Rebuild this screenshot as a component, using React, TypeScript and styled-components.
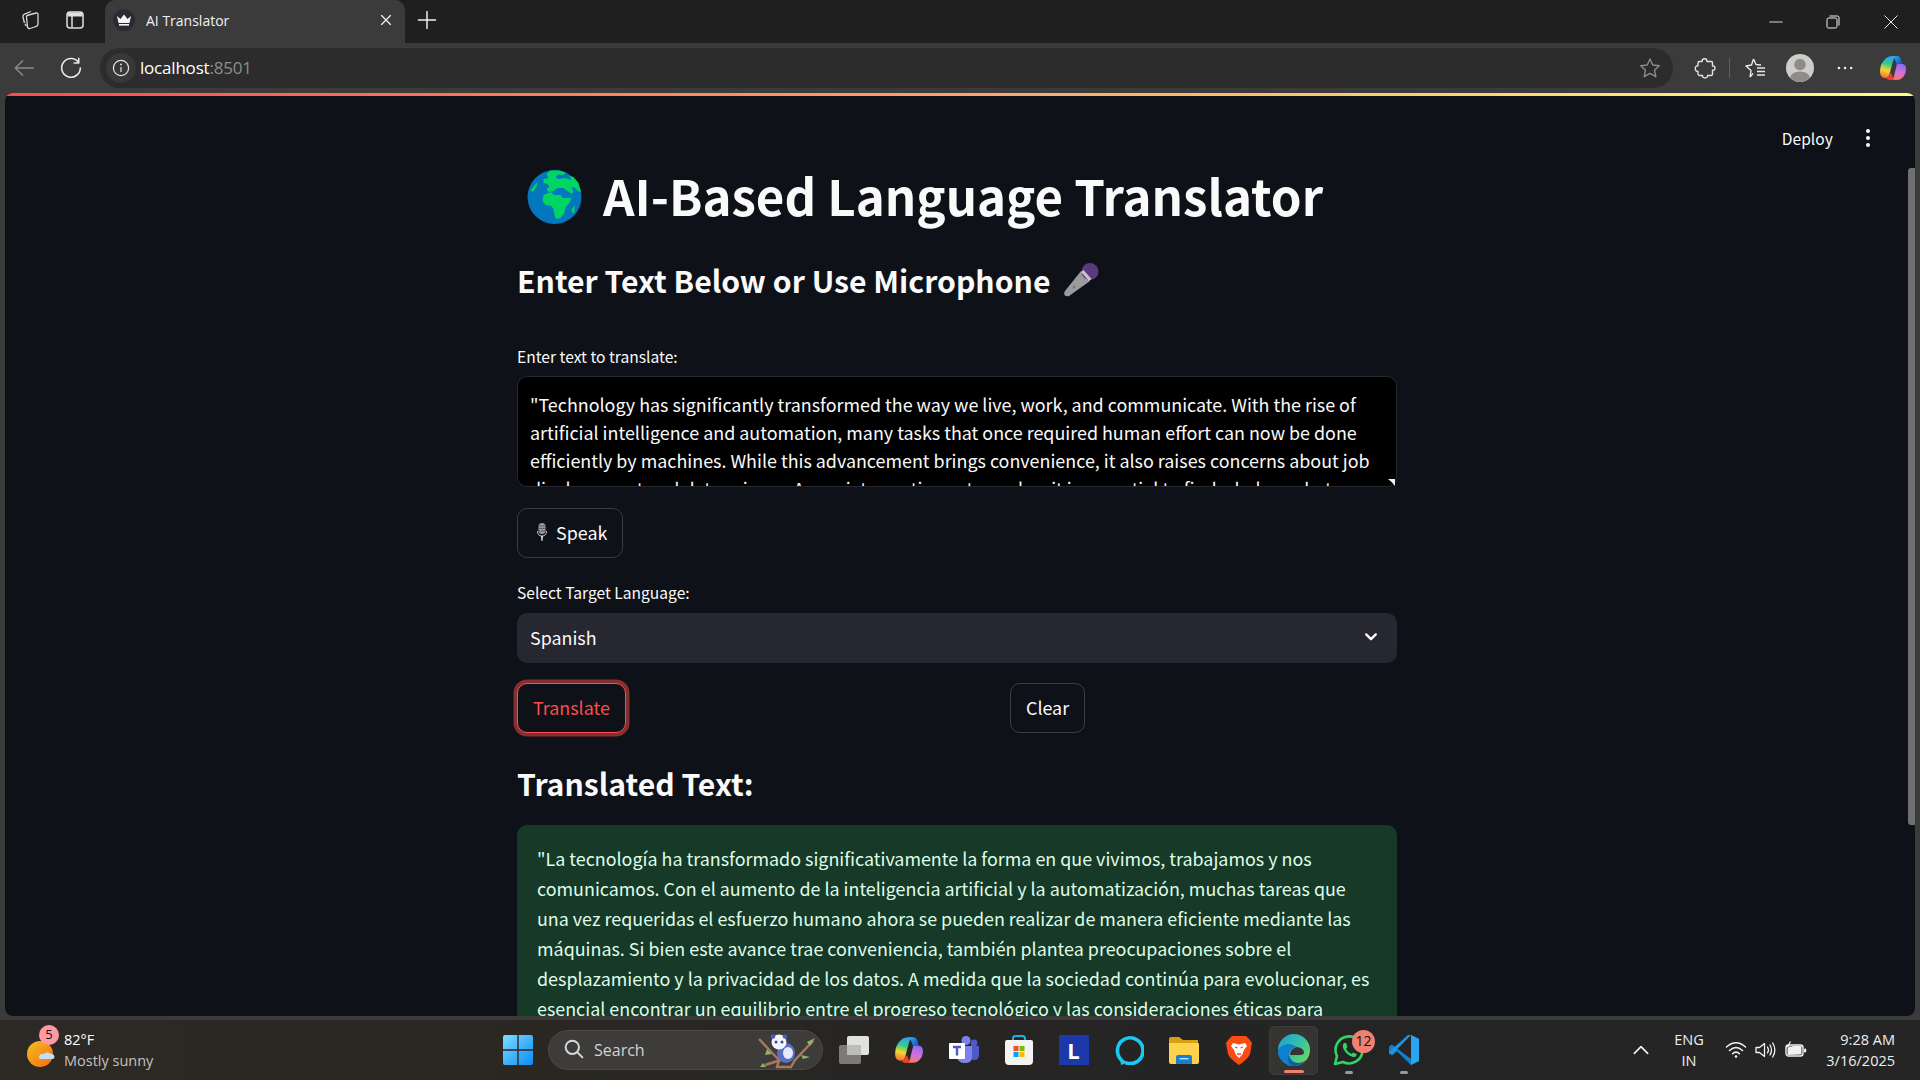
import React from "react";
import styled, { createGlobalStyle } from "styled-components";

const APP_FONT = '"Noto Sans CJK SC", "Noto Sans", "Liberation Sans", sans-serif';
const UI_FONT = '"Open Sans", "Noto Sans", "Liberation Sans", sans-serif';

const Global = createGlobalStyle`
  html, body { margin: 0; padding: 0; background: #3b3b3b; }
  #root { width: 1920px; height: 1080px; }
  * { box-sizing: border-box; }
`;

const Desktop = styled.div`
  width: 1920px; height: 1080px; overflow: hidden;
  display: flex; flex-direction: column; background: #3b3b3b;
  font-family: ${UI_FONT}; color: #fafafa;
`;

/* ---------- Browser chrome ---------- */
const TabStrip = styled.div`
  height: 43px; flex: none; background: #1f1f1f; display: flex; align-items: stretch;
`;
const StripIcon = styled.div<{ $w: number }>`
  width: ${p => p.$w}px; flex: none; display: flex; align-items: center; justify-content: center; padding-bottom: 3px;
`;
const StripLead = styled.div`
  width: 105px; flex: none; display: flex; padding-left: 7px; padding-right: 8px; justify-content: space-between;
`;
const Tab = styled.div`
  width: 300px; flex: none; background: #3b3b3b; border-radius: 10px 10px 0 0;
  display: flex; align-items: center; padding: 0 11px 3px 8px;
`;
const Favicon = styled.div`
  width: 22px; height: 22px; border-radius: 50%; background: #2a2a35; flex: none;
  display: flex; align-items: center; justify-content: center; margin-right: 11px;
`;
const TabTitle = styled.span`
  flex: 1; font-size: 14px; color: #f2f2f2; white-space: nowrap;
`;
const WindowControls = styled.div`
  margin-left: auto; display: flex; align-items: center; width: 173px;
`;
const WinBtn = styled.div`
  width: 57.6px; height: 43px; display: flex; align-items: center; justify-content: center;
`;
const Toolbar = styled.div`
  height: 50px; flex: none; display: flex; align-items: center; background: #3b3b3b; padding: 5px 0;
`;
const NavSlot = styled.div<{ $w: number }>`
  width: ${p => p.$w}px; flex: none; display: flex; align-items: center; justify-content: center;
`;
const AddressBar = styled.div`
  width: 1573px; height: 40px; border-radius: 20px; background: #2c2c2c;
  display: flex; align-items: center; flex: none; padding: 0 12px 0 6px;
`;
const InfoDisc = styled.div`
  width: 30px; height: 30px; border-radius: 50%; background: #383838; flex: none;
  display: flex; align-items: center; justify-content: center; margin-right: 4px;
`;
const Url = styled.span`
  font-size: 17px; color: #fff; letter-spacing: -0.2px; margin-top: -2px;
`;
const UrlPort = styled.span`
  color: #8c8c8c;
`;
const AddressEnd = styled.div`
  margin-left: auto; display: flex; align-items: center;
`;
const ToolActions = styled.div`
  display: flex; align-items: center; flex: none; margin-left: 20px;
`;
const ToolDivider = styled.div`
  width: 1px; height: 20px; background: #5f5f5f; flex: none; margin: 0 13px 0 12px;
`;
const Avatar = styled.div`
  width: 28px; height: 28px; flex: none; margin: 0 19px;
`;

/* ---------- Streamlit page ---------- */
const Page = styled.main`
  flex: 1; min-height: 0; margin: 0 5px 4px; border-radius: 8px; overflow: hidden;
  position: relative; background: #0e1117;
`;
const Decoration = styled.div`
  height: 3px; background: linear-gradient(90deg, rgb(255, 75, 75), rgb(255, 253, 128));
`;
const AppHeader = styled.div`
  position: absolute; top: 33px; right: 45px; display: flex; align-items: center; gap: 33px;
  font-family: ${APP_FONT}; font-size: 15.6px; line-height: 24px; color: #fafafa;
`;
const Kebab = styled.div`
  display: flex; flex-direction: column; gap: 2.6px;
  span { width: 4.2px; height: 4.2px; border-radius: 50%; background: #fafafa; display: block; }
`;
const ScrollThumb = styled.div`
  position: absolute; right: 0; top: 75px; width: 7px; height: 657px; background: #6f6f6f; border-radius: 3px 0 0 3px;
`;
const Column = styled.div`
  width: 880px; margin-left: 512px; padding-top: 62px; font-family: ${APP_FONT};
`;
const Title = styled.h1`
  margin: 0; height: 74px; display: flex; align-items: center; gap: 21px; padding-left: 10px;
  font-size: 49.2px; line-height: 74px; font-weight: 700; color: #fafafa; white-space: nowrap;
  svg { flex: none; margin-top: 3px; }
`;
const Subhead = styled.h2<{ $top: number }>`
  margin: ${p => p.$top}px 0 0; display: flex; align-items: center; gap: 13px;
  font-size: 30.2px; line-height: 48px; font-weight: 600; color: #fafafa; white-space: nowrap;
  svg { flex: none; }
`;
const FieldLabel = styled.label<{ $top: number }>`
  display: block; margin-top: ${p => p.$top}px; font-size: 15.6px; line-height: 24px; color: #fafafa;
`;
const TextAreaWrap = styled.div`
  position: relative; margin-top: 8px; height: 111px;
`;
const TextArea = styled.textarea`
  display: block; width: 880px; height: 111px; margin: 0; padding: 13px 13px 0 12px;
  background: #000; border: 1px solid #262730; border-radius: 10px; color: #fafafa;
  font-family: ${APP_FONT}; font-size: 17.9px; line-height: 28px; outline: none;
  resize: none; overflow: hidden; scrollbar-width: none;
`;
const ResizeGrip = styled.span`
  position: absolute; right: 2px; bottom: 1px; width: 7px; height: 7px; background: #f2f2f2;
  clip-path: polygon(0 0, 100% 0, 100% 100%, 55% 45%);
`;
const Button = styled.button<{ $active?: boolean }>`
  height: 50px; padding: 0 15px 2px; border-radius: 10px;
  background: #0e1117; font-family: ${APP_FONT}; font-size: 17.9px; line-height: 28px;
  color: ${p => (p.$active ? "#ff4b4b" : "#fafafa")};
  border: 1px solid ${p => (p.$active ? "#ff4b4b" : "#3a3b44")};
  box-shadow: ${p => (p.$active ? "0 0 0 3.5px rgba(255, 75, 75, 0.5)" : "none")};
  display: inline-flex; align-items: center; gap: 5px;
`;
const SpeakRow = styled.div`
  margin-top: 21px; display: flex;
`;
const SelectBox = styled.div`
  margin-top: 9px; height: 50px; border-radius: 10px; background: #262730; display: flex;
  align-items: center; justify-content: space-between; padding: 0 19px 2px 13px; font-size: 17.9px; color: #fafafa;
`;
const ActionRow = styled.div`
  margin-top: 20px; display: grid; grid-template-columns: 493px auto; justify-content: start;
`;
const ActionCell = styled.div`
  display: flex;
`;
const ResultBox = styled.div`
  margin-top: 18px; background: #173a28; border-radius: 10px; padding: 18px 20px 30px;
  color: #dffde9; font-size: 17.9px; line-height: 30px; height: 300px;
`;

/* ---------- Taskbar ---------- */
const Taskbar = styled.footer`
  height: 60px; flex: none; display: flex; align-items: center; position: relative;
  background: linear-gradient(90deg, #2d2925, #2a2723 30%, #252424 60%, #252525);
`;
const Weather = styled.div`
  width: 493px; flex: none; display: flex; align-items: center; padding-left: 27px; gap: 11px;
`;
const WeatherArt = styled.div`
  position: relative; width: 26px; height: 26px; flex: none; margin-top: 8px;
`;
const WeatherBadge = styled.span`
  position: absolute; left: 12px; top: -16px; width: 20px; height: 20px; border-radius: 50%;
  background: #ff9aa4; color: #111; font-size: 13px; line-height: 19px; text-align: center;
`;
const WeatherText = styled.div`
  display: flex; flex-direction: column; font-size: 14.5px; line-height: 21px; white-space: nowrap; color: #fff;
`;
const WeatherSub = styled.span`
  color: #c4c2bf;
`;
const TaskCenter = styled.div`
  display: flex; align-items: center; gap: 6px;
`;
const TaskSlot = styled.div<{ $active?: boolean }>`
  width: 49px; height: 49px; flex: none; border-radius: 5px; position: relative;
  display: flex; align-items: center; justify-content: center;
  background: ${p => (p.$active ? "#363431" : "transparent")};
  border: 1px solid ${p => (p.$active ? "#3e3c3a" : "transparent")};
`;
const SearchPill = styled.div`
  width: 275px; height: 40px; flex: none; border-radius: 20px; background: #3d3c3a; border: 1px solid #4b4a48;
  display: flex; align-items: center; padding-left: 14px; font-size: 16px; color: #d2d2d0; gap: 7px;
  position: relative;
`;
const SearchArt = styled.div`
  position: absolute; right: 5px; top: 2px; width: 60px; height: 36px;
`;
const RunDot = styled.span<{ $on?: boolean }>`
  position: absolute; bottom: ${p => (p.$on ? 1 : 0)}px; left: 50%; transform: translateX(-50%);
  height: 3px; border-radius: 2px; width: ${p => (p.$on ? 20 : 8)}px;
  background: ${p => (p.$on ? "#f08070" : "#9a9a9a")};
`;
const CountBadge = styled.span`
  position: absolute; right: -3px; top: 3px; width: 23px; height: 23px; border-radius: 50%;
  background: #f08070; color: #111; font-size: 14px; line-height: 22px; text-align: center;
`;
const LetterTile = styled.div`
  width: 30px; height: 30px; background: #1b39a8; color: #fff; font-weight: 700; font-size: 22px;
  line-height: 30px; text-align: center; font-family: ${UI_FONT};
`;
const Tray = styled.div`
  margin-left: auto; display: flex; align-items: center; height: 100%; padding-right: 25px;
`;
const TrayIcon = styled.div<{ $w: number }>`
  width: ${p => p.$w}px; flex: none; display: flex; align-items: center; justify-content: center;
`;
const Lang = styled.div`
  width: 50px; text-align: center; font-size: 14.5px; line-height: 21px; color: #eee; margin: 0 7px 0 8px;
`;
const Clock = styled.div`
  width: 82px; margin-left: 2px; text-align: right; font-size: 14.5px; line-height: 21px; color: #eee; white-space: nowrap;
`;

/* ---------- Drawings ---------- */
const Collections = () => (
  <svg width="22" height="22" viewBox="0 0 22 22" fill="none" stroke="#d9d9d9" strokeWidth="1.3">
    <path d="M8 6.5 L17 4 Q19 3.6 19 5.5 V15 Q19 17 17 17.5 L11 19.5 Q9 20 8.5 18 L7.5 8 Q7.4 7 8 6.5Z" />
    <path d="M5.5 14 L4 8 Q3.7 6 5.5 5.2 L12 2.5" />
    <path d="M7.5 17 L6 15" />
  </svg>
);
const VerticalTabs = () => (
  <svg width="20" height="20" viewBox="0 0 20 20" fill="none">
    <rect x="2" y="2" width="16" height="16" rx="3" stroke="#e0e0e0" strokeWidth="1.5" />
    <path d="M2.5 5 Q2.5 2.5 5 2.5 H15 Q17.5 2.5 17.5 5 V6.5 H2.5Z" fill="#e0e0e0" />
    <path d="M7 6 V17.5" stroke="#e0e0e0" strokeWidth="1.5" />
  </svg>
);
const Crown = () => (
  <svg width="16" height="12" viewBox="0 0 16 12">
    <path d="M1 2 L4.5 5 L8 0.5 L11.5 5 L15 2 L13.5 9 H2.5Z" fill="#f5f5f5" />
    <rect x="3" y="10" width="10" height="1.6" fill="#f5f5f5" />
  </svg>
);
const Line = ({ d, size = 18, color = "#e8e8e8", w = 1.3 }: { d: string; size?: number; color?: string; w?: number }) => (
  <svg width={size} height={size} viewBox="0 0 18 18" fill="none" stroke={color} strokeWidth={w} strokeLinecap="round" strokeLinejoin="round">
    <path d={d} />
  </svg>
);
const Restore = () => (
  <svg width="14" height="14" viewBox="0 0 14 14" fill="none" stroke="#f0f0f0" strokeWidth="1">
    <rect x="1" y="3" width="10" height="10" rx="1.5" />
    <path d="M3.5 1 H11.5 Q13 1 13 2.5 V10.5" />
  </svg>
);
const StarIcon = ({ color }: { color: string }) => (
  <svg width="22" height="22" viewBox="0 0 22 22" fill="none" stroke={color} strokeWidth="1.4" strokeLinejoin="round">
    <path d="M11 2 L13.8 8 L20.3 8.8 L15.5 13.2 L16.8 19.7 L11 16.4 L5.2 19.7 L6.5 13.2 L1.7 8.8 L8.2 8Z" />
  </svg>
);
const PuzzleIcon = () => (
  <svg width="22" height="22" viewBox="0 0 22 22" fill="none" stroke="#e4e4e4" strokeWidth="1.4" strokeLinejoin="round">
    <path d="M8 4.5 Q8 1.8 10.5 1.8 Q13 1.8 13 4.5 H17.5 Q18.5 4.5 18.5 6 V9 Q21 8.8 21 11 Q21 13.4 18.5 13.2 V17 Q18.5 18.5 17 18.5 H13.5 Q13.6 21 11 21 Q8.4 21 8.5 18.5 H5.5 Q4.2 18.5 4 17 V14.5 Q1.3 14.6 1.3 11.5 Q1.3 8.6 4 8.8 V6 Q4 4.5 5.5 4.5Z" />
  </svg>
);
const FavStar = () => (
  <svg width="22" height="22" viewBox="0 0 22 22" fill="none" stroke="#e8e8e8" strokeWidth="1.4" strokeLinejoin="round">
    <path d="M9.5 2 L12 7.5 L17 8 M6 20 L9 16.5 M6 20 L7 13.5 L2 9 L7.5 8 L9.5 2" />
    <path d="M13 11 H21 M13 14.5 H21 M13 18 H21" />
  </svg>
);
const AvatarArt = () => (
  <svg width="28" height="28" viewBox="0 0 28 28">
    <circle cx="14" cy="14" r="14" fill="#cfcdc9" />
    <circle cx="14" cy="10.5" r="5.8" fill="#8f8d8a" />
    <path d="M3.8 23.5 Q6 17.5 14 17.5 Q22 17.5 24.2 23.5 A14 14 0 0 1 3.8 23.5Z" fill="#8f8d8a" />
  </svg>
);
const CopilotArt = ({ size }: { size: number }) => (
  <svg width={size} height={size} viewBox="0 0 28 28">
    <defs>
      <linearGradient id="copL" x1="0.5" y1="0" x2="0.3" y2="1">
        <stop offset="0" stopColor="#27a6f0" />
        <stop offset="0.35" stopColor="#36c98a" />
        <stop offset="0.65" stopColor="#f4d62f" />
        <stop offset="1" stopColor="#f5703a" />
      </linearGradient>
      <linearGradient id="copT" x1="0" y1="0" x2="1" y2="1">
        <stop offset="0" stopColor="#2bb4f4" />
        <stop offset="1" stopColor="#1c3fc0" />
      </linearGradient>
      <linearGradient id="copR" x1="0.6" y1="0" x2="0.4" y2="1">
        <stop offset="0" stopColor="#8f6cf4" />
        <stop offset="0.55" stopColor="#d86fd8" />
        <stop offset="1" stopColor="#f47a5a" />
      </linearGradient>
    </defs>
    <path d="M8 3.5 Q10 2 13 2 H18 Q15 3 14 7 L10.5 20 Q9.5 24 6 24 Q1 24 1 17.5 Q1 8.5 8 3.5Z" fill="url(#copL)" />
    <path d="M13 2 H18 Q20.8 2 21.7 5 L23.5 11 H18 L16.3 6.2 Q15.5 3.6 13 2Z" fill="url(#copT)" />
    <path d="M18 10 H22.5 Q27 10 27 15 Q27 21 22.5 24.5 Q20.5 26 17 26 H12 Q14.5 25 15.3 21Z" fill="url(#copR)" />
    <path d="M6 24 Q9.5 24 10.5 20 L12.3 19 L14 24 Q14.5 25.5 16 26 H12.5 Q9.5 26.5 8 25Z" fill="#e8402e" />
  </svg>
);
const Globe = () => (
  <svg width="55" height="54" viewBox="0 0 54 54" role="img">
    <circle cx="27" cy="27" r="27" fill="#0277bd" />
    <path d="M23 0.6 L32 0.4 L38 2.4 L36 5 L31 4.5 L28 7 L31 9 L38 8 L44 10 L42 6 L46 7 L51 13 L53.5 22 L50 21 L48 18 L44 17 L46 22 L44 24 L40 21 L36 18 L30 18 L26 21 L21 22 L19 19 L22 17 L20 14 L16 13 L16 9 L21 8 L19 4Z" fill="#00d563" />
    <path d="M16 25 L23 22 L27 25 L33 25 L35 28 L41 28 L44 28 L42 33 L38 37 L37 43 L33 48 L29 49 L27 46 L26 39 L24 36 L18 35 L15 31Z" fill="#00d563" />
    <path d="M44 40 L47 35 L47 42 L45 44Z" fill="#00d563" />
    <path d="M3 20 L10 12 L9 17 L5 22Z" fill="#00d563" />
  </svg>
);
const MicEmoji = () => (
  <svg width="36" height="34" viewBox="0 0 36 34" role="img">
    <path d="M18 8 L27 18 L6 33 Q3 34 1.5 32 Q0.5 30 2 28Z" fill="#9b9b9b" />
    <circle cx="11" cy="24" r="1.4" fill="#7b7b7b" />
    <circle cx="27" cy="8.5" r="8.5" fill="#5a3a7c" />
    <path d="M18 9 L26 18 L28.5 16 L20.5 7Z" fill="#c9c5cd" />
  </svg>
);
const StudioMic = () => (
  <svg width="18" height="20" viewBox="-3.5 0 18 20" role="img">
    <rect x="2" y="1" width="7" height="11" rx="3.5" fill="#9a9a9a" />
    <path d="M2.5 4 H8.5 M2.5 6.5 H8.5 M2.5 9 H8.5" stroke="#5a5a5a" strokeWidth="0.9" />
    <path d="M1 9 Q1 14 5.5 14 Q10 14 10 9" fill="none" stroke="#d8d8d8" strokeWidth="0.9" />
    <path d="M4.5 14 H6.5 L6 19 H5Z" fill="#e4e4e4" />
  </svg>
);
const Chevron = () => (
  <svg width="14" height="10" viewBox="0 0 14 10" fill="none" stroke="#fafafa" strokeWidth="2.4" strokeLinecap="round" strokeLinejoin="round">
    <path d="M2.2 2.4 L7 7.2 L11.8 2.4" />
  </svg>
);
const SunCloud = () => (
  <svg width="28" height="27" viewBox="0 0 28 27">
    <defs>
      <linearGradient id="sun" x1="0" y1="0" x2="1" y2="1">
        <stop offset="0" stopColor="#f3c021" />
        <stop offset="1" stopColor="#f76a12" />
      </linearGradient>
    </defs>
    <circle cx="13" cy="13" r="13" fill="url(#sun)" />
    <path d="M12 16 Q13 12 17 13 Q19 10.5 23 12.5 Q27 13 27.5 15.5 Q27.5 18 25 18 H14 Q11.5 18 12 16Z" fill="#c6ddf4" />
  </svg>
);
const WinLogo = () => (
  <svg width="30" height="30" viewBox="0 0 30 30">
    <defs>
      <linearGradient id="win" x1="0" y1="0" x2="1" y2="1">
        <stop offset="0" stopColor="#7fdcff" />
        <stop offset="1" stopColor="#0b8cf2" />
      </linearGradient>
    </defs>
    <path d="M0 2 Q0 0 2 0 H14.3 V14.3 H0Z M15.7 0 H28 Q30 0 30 2 V14.3 H15.7Z M0 15.7 H14.3 V30 H2 Q0 30 0 28Z M15.7 15.7 H30 V28 Q30 30 28 30 H15.7Z" fill="url(#win)" />
  </svg>
);
const Panda = () => (
  <svg width="60" height="36" viewBox="0 0 60 36">
    <path d="M2 6 L22 27 L20 34 H34 L38 27 L56 8" fill="none" stroke="#a77a5c" strokeWidth="2.4" />
    <path d="M8 32 L24 27" stroke="#a77a5c" strokeWidth="2.4" />
    <path d="M10 16 L15 21 L8 22Z M50 9 L58 5 L53 13Z M44 22 L53 24 L46 26Z M6 30 L9 34 L3 34Z" fill="#8fb465" />
    <ellipse cx="29" cy="20" rx="9" ry="10" fill="#5a6fc4" />
    <ellipse cx="31" cy="20" rx="5" ry="6" fill="#e8ecfa" />
    <circle cx="22" cy="9" r="7.5" fill="#f2f4fb" />
    <circle cx="16" cy="3.5" r="2.3" fill="#4a5fb4" />
    <circle cx="28" cy="3.5" r="2.3" fill="#4a5fb4" />
    <circle cx="19" cy="9" r="1.5" fill="#3a4b98" />
    <circle cx="25" cy="9" r="1.5" fill="#3a4b98" />
  </svg>
);
const TaskView = () => (
  <svg width="30" height="28" viewBox="0 0 30 28">
    <rect x="0" y="9" width="22" height="19" rx="2" fill="#7b7a78" />
    <rect x="8" y="0" width="22" height="19" rx="2" fill="#f1f1f1" opacity="0.92" />
    <rect x="8" y="9" width="14" height="10" fill="#bdbcbb" />
  </svg>
);
const Teams = () => (
  <svg width="32" height="30" viewBox="0 0 32 30">
    <circle cx="26" cy="8" r="3.4" fill="#5059c9" />
    <circle cx="18" cy="5.5" r="4.5" fill="#7b83eb" />
    <path d="M21 11 H31 V20 Q31 25 26 25 Q22 25 21 22Z" fill="#5059c9" />
    <path d="M9 11 H24 V22 Q24 28 17 28 Q10 28 9 22Z" fill="#7b83eb" />
    <rect x="1" y="8" width="16" height="16" rx="1" fill="#fff" />
    <path d="M5 12 H13 M9 12 V20.5" stroke="#5059c9" strokeWidth="2.4" />
  </svg>
);
const Store = () => (
  <svg width="30" height="30" viewBox="0 0 30 30">
    <path d="M9 7 V3.5 Q9 1 11.5 1 H18.5 Q21 1 21 3.5 V7" fill="none" stroke="#19b3e6" strokeWidth="2" />
    <path d="M1 7 Q1 5 3 5 H27 Q29 5 29 7 V26 Q29 30 25 30 H5 Q1 30 1 26Z" fill="#f3f3f3" />
    <rect x="9.5" y="11" width="5" height="5" fill="#f25022" />
    <rect x="15.5" y="11" width="5" height="5" fill="#7fba00" />
    <rect x="9.5" y="17" width="5" height="5" fill="#00a4ef" />
    <rect x="15.5" y="17" width="5" height="5" fill="#ffb900" />
  </svg>
);
const Alexa = () => (
  <svg width="30" height="30" viewBox="0 0 30 30">
    <path d="M8 25.5 A12.8 12.8 0 1 1 11.5 27.6" fill="none" stroke="#19c9f0" strokeWidth="3.6" />
    <path d="M6 23 L14 27.5 L7 30Z" fill="#19c9f0" />
  </svg>
);
const Folder = () => (
  <svg width="30" height="27" viewBox="0 0 30 27">
    <path d="M0 2 Q0 0 2 0 H10 L14 3 H29 V8 H0Z" fill="#d9a016" />
    <path d="M0 6 H29 Q30 6 30 7 V25 Q30 27 28 27 H2 Q0 27 0 25Z" fill="#ffd24d" />
    <path d="M7 27 V20 Q7 18 9 18 H21 Q23 18 23 20 V27Z" fill="#1a7fd0" />
    <rect x="10.5" y="21" width="9" height="1.4" fill="#bfe2fa" />
  </svg>
);
const Brave = () => (
  <svg width="26" height="30" viewBox="0 0 26 30">
    <path d="M6 1 H20 L23 4 L26 8 L24 19 Q22 24 13 30 Q4 24 2 19 L0 8 L3 4Z" fill="#fb4b12" />
    <path d="M7 8 L13 9.5 L19 8 L21 11 L18 15 L16 20 L13 23 L10 20 L8 15 L5 11Z" fill="#fff" />
    <path d="M9 12 L11.5 13 M17 12 L14.5 13 M11 19 H15" stroke="#fb4b12" strokeWidth="1.3" />
  </svg>
);
const Edge = () => (
  <svg width="32" height="32" viewBox="0 0 32 32">
    <defs>
      <linearGradient id="edgeG" x1="0" y1="0" x2="1" y2="0.8">
        <stop offset="0" stopColor="#1f9cd8" />
        <stop offset="0.55" stopColor="#35c1a6" />
        <stop offset="1" stopColor="#6fd95a" />
      </linearGradient>
    </defs>
    <circle cx="16" cy="16" r="16" fill="url(#edgeG)" />
    <path d="M0 16 A16 16 0 0 0 24 30 Q13 32 11 23 Q10 15 19 13 Q12 8 6 11 Q1 13 0 16Z" fill="#0f7fd0" />
    <path d="M19 13 Q26 14 26 19 Q25 21 21 21 H12 Q12 15 19 13Z" fill="#363431" />
    <path d="M11 21 Q12 28 20 29 Q25 29 29 25 Q25 31 17 32 Q8 31 11 21Z" fill="#135a9e" />
  </svg>
);
const Whatsapp = () => (
  <svg width="32" height="32" viewBox="0 0 32 32" fill="none">
    <path d="M2 30 L4 22 A13.5 13.5 0 1 1 10 28Z" stroke="#2fd565" strokeWidth="2.6" strokeLinejoin="round" />
    <path d="M11 9 Q9 11 10.5 15 Q13.5 21 20 23 Q23 23.5 24 20.5 L20.5 18.5 L18.5 20 Q15 18.5 13 15 L14.5 13 L13 9Z" fill="#2fd565" />
  </svg>
);
const VSCode = () => (
  <svg width="30" height="30" viewBox="0 0 30 30">
    <path d="M22 0 L30 4 V26 L22 30 L8 16.5 L3 20.5 L0 18.5 V11.5 L3 9.5 L22 24 Z" fill="#0f7fc8" />
    <path d="M22 0 L30 4 V26 L22 30Z" fill="#29a4ee" />
    <path d="M22 0 L3 19.5 L0 18 L0 17 L19 0Z" fill="#1f97e0" />
    <path d="M22 9 L14 15 L22 21Z" fill="#252525" />
  </svg>
);
const WifiIcon = () => (
  <svg width="22" height="18" viewBox="0 0 22 18" fill="none" stroke="#f2f2f2" strokeWidth="1.5" strokeLinecap="round">
    <path d="M1.5 6 Q11 -2.5 20.5 6" />
    <path d="M4.5 9.5 Q11 3.5 17.5 9.5" />
    <path d="M7.5 12.7 Q11 9.5 14.5 12.7" />
    <circle cx="11" cy="15.5" r="1.3" fill="#f2f2f2" stroke="none" />
  </svg>
);
const VolumeIcon = () => (
  <svg width="22" height="18" viewBox="0 0 22 18" fill="none" stroke="#f2f2f2" strokeWidth="1.3" strokeLinejoin="round" strokeLinecap="round">
    <path d="M1 6.5 H4.5 L9.5 2.5 V15.5 L4.5 11.5 H1Z" />
    <path d="M12.5 6 Q14.5 9 12.5 12" />
    <path d="M15 4 Q18 9 15 14" />
    <path d="M17.7 2 Q22 9 17.7 16" />
  </svg>
);
const BatteryIcon = () => (
  <svg width="22" height="18" viewBox="0 0 22 18">
    <rect x="1" y="4" width="17" height="11" rx="2.5" fill="none" stroke="#f2f2f2" strokeWidth="1.4" />
    <path d="M2.5 14 V7 L8 5 H16.5 V13.5Z" fill="#f2f2f2" />
    <rect x="19" y="7.5" width="2.2" height="4" rx="1" fill="#f2f2f2" />
    <path d="M5.5 0.5 L2.5 6 H5.5 L3.5 10.5" fill="none" stroke="#f2f2f2" strokeWidth="1.2" />
  </svg>
);

const SOURCE = `"Technology has significantly transformed the way we live, work, and communicate. With the rise of artificial intelligence and automation, many tasks that once required human effort can now be done efficiently by machines. While this advancement brings convenience, it also raises concerns about job displacement and data privacy. As society continues to evolve, it is essential to find a balance between technological progress and ethical considerations to ensure a better future for all."`;
const RESULT = `"La tecnología ha transformado significativamente la forma en que vivimos, trabajamos y nos comunicamos. Con el aumento de la inteligencia artificial y la automatización, muchas tareas que una vez requeridas el esfuerzo humano ahora se pueden realizar de manera eficiente mediante las máquinas. Si bien este avance trae conveniencia, también plantea preocupaciones sobre el desplazamiento y la privacidad de los datos. A medida que la sociedad continúa para evolucionar, es esencial encontrar un equilibrio entre el progreso tecnológico y las consideraciones éticas para garantizar un futuro mejor para todos."`;

export default function App() {
  return (
    <Desktop>
      <Global />
      <TabStrip>
        <StripLead>
          <StripIcon $w={45}><Collections /></StripIcon>
          <StripIcon $w={45}><VerticalTabs /></StripIcon>
        </StripLead>
        <Tab>
          <Favicon><Crown /></Favicon>
          <TabTitle>AI Translator</TabTitle>
          <Line size={16} w={1.4} color="#f0f0f0" d="M4 4 L14 14 M14 4 L4 14" />
        </Tab>
        <StripIcon $w={44}><Line size={22} w={1.2} color="#f0f0f0" d="M9 2 V16 M2 9 H16" /></StripIcon>
        <WindowControls>
          <WinBtn><Line size={16} w={1} color="#f0f0f0" d="M2 9 H16" /></WinBtn>
          <WinBtn><Restore /></WinBtn>
          <WinBtn><Line size={16} w={1.1} color="#f0f0f0" d="M2 2 L16 16 M16 2 L2 16" /></WinBtn>
        </WindowControls>
      </TabStrip>

      <Toolbar>
        <NavSlot $w={48}><Line size={24} w={1.1} color="#8a8a8a" d="M16 9 H2.5 M8 3.5 L2.5 9 L8 14.5" /></NavSlot>
        <NavSlot $w={45}><Line size={24} w={1.2} color="#e8e8e8" d="M14.8 5 A7 7 0 1 0 16 9 M14.8 1.8 V5.3 H11.3" /></NavSlot>
        <NavSlot $w={7} />
        <AddressBar>
          <InfoDisc>
            <svg width="18" height="18" viewBox="0 0 18 18" fill="none" stroke="#e4e4e4" strokeWidth="1.2">
              <circle cx="9" cy="9" r="7.6" />
              <path d="M9 8 V13" />
              <circle cx="9" cy="5.5" r="0.9" fill="#e4e4e4" stroke="none" />
            </svg>
          </InfoDisc>
          <Url>localhost<UrlPort>:8501</UrlPort></Url>
          <AddressEnd><StarIcon color="#8c8c8c" /></AddressEnd>
        </AddressBar>
        <ToolActions>
          <NavSlot $w={24}><PuzzleIcon /></NavSlot>
          <ToolDivider />
          <NavSlot $w={24}><FavStar /></NavSlot>
          <Avatar><AvatarArt /></Avatar>
          <NavSlot $w={24}><Line size={20} w={2.2} color="#eaeaea" d="M3.5 9 H3.6 M9 9 H9.1 M14.5 9 H14.6" /></NavSlot>
          <NavSlot $w={12} />
          <NavSlot $w={48}><CopilotArt size={28} /></NavSlot>
        </ToolActions>
      </Toolbar>

      <Page>
        <Decoration />
        <AppHeader>
          <span>Deploy</span>
          <Kebab><span /><span /><span /></Kebab>
        </AppHeader>
        <ScrollThumb />
        <Column>
          <Title><Globe />AI-Based Language Translator</Title>
          <Subhead $top={24}>Enter Text Below or Use Microphone <MicEmoji /></Subhead>
          <FieldLabel $top={40}>Enter text to translate:</FieldLabel>
          <TextAreaWrap>
            <TextArea readOnly value={SOURCE} />
            <ResizeGrip />
          </TextAreaWrap>
          <SpeakRow><Button><StudioMic /><span>Speak</span></Button></SpeakRow>
          <FieldLabel $top={22}>Select Target Language:</FieldLabel>
          <SelectBox>Spanish<Chevron /></SelectBox>
          <ActionRow>
            <ActionCell><Button $active>Translate</Button></ActionCell>
            <ActionCell><Button>Clear</Button></ActionCell>
          </ActionRow>
          <Subhead $top={26}>Translated Text:</Subhead>
          <ResultBox>{RESULT}</ResultBox>
        </Column>
      </Page>

      <Taskbar>
        <Weather>
          <WeatherArt><SunCloud /><WeatherBadge>5</WeatherBadge></WeatherArt>
          <WeatherText>82°F<WeatherSub>Mostly sunny</WeatherSub></WeatherText>
        </Weather>
        <TaskCenter>
          <TaskSlot><WinLogo /></TaskSlot>
          <SearchPill>
            <Line size={24} w={1.5} color="#d8d8d8" d="M14.5 14.5 L11 11 M12 7 A5 5 0 1 1 2 7 A5 5 0 1 1 12 7" />
            <span>Search</span>
            <SearchArt><Panda /></SearchArt>
          </SearchPill>
          <TaskSlot><TaskView /></TaskSlot>
          <TaskSlot><CopilotArt size={30} /></TaskSlot>
          <TaskSlot><Teams /></TaskSlot>
          <TaskSlot><Store /></TaskSlot>
          <TaskSlot><LetterTile>L</LetterTile></TaskSlot>
          <TaskSlot><Alexa /></TaskSlot>
          <TaskSlot><Folder /></TaskSlot>
          <TaskSlot><Brave /></TaskSlot>
          <TaskSlot $active><Edge /><RunDot $on /></TaskSlot>
          <TaskSlot><Whatsapp /><CountBadge>12</CountBadge><RunDot /></TaskSlot>
          <TaskSlot><VSCode /><RunDot /></TaskSlot>
        </TaskCenter>
        <Tray>
          <TrayIcon $w={30}><Line size={20} w={1.5} color="#f0f0f0" d="M3 12 L9 6 L15 12" /></TrayIcon>
          <Lang>ENG<br />IN</Lang>
          <TrayIcon $w={30}><WifiIcon /></TrayIcon>
          <TrayIcon $w={30}><VolumeIcon /></TrayIcon>
          <TrayIcon $w={30}><BatteryIcon /></TrayIcon>
          <Clock>9:28 AM<br />3/16/2025</Clock>
        </Tray>
      </Taskbar>
    </Desktop>
  );
}
